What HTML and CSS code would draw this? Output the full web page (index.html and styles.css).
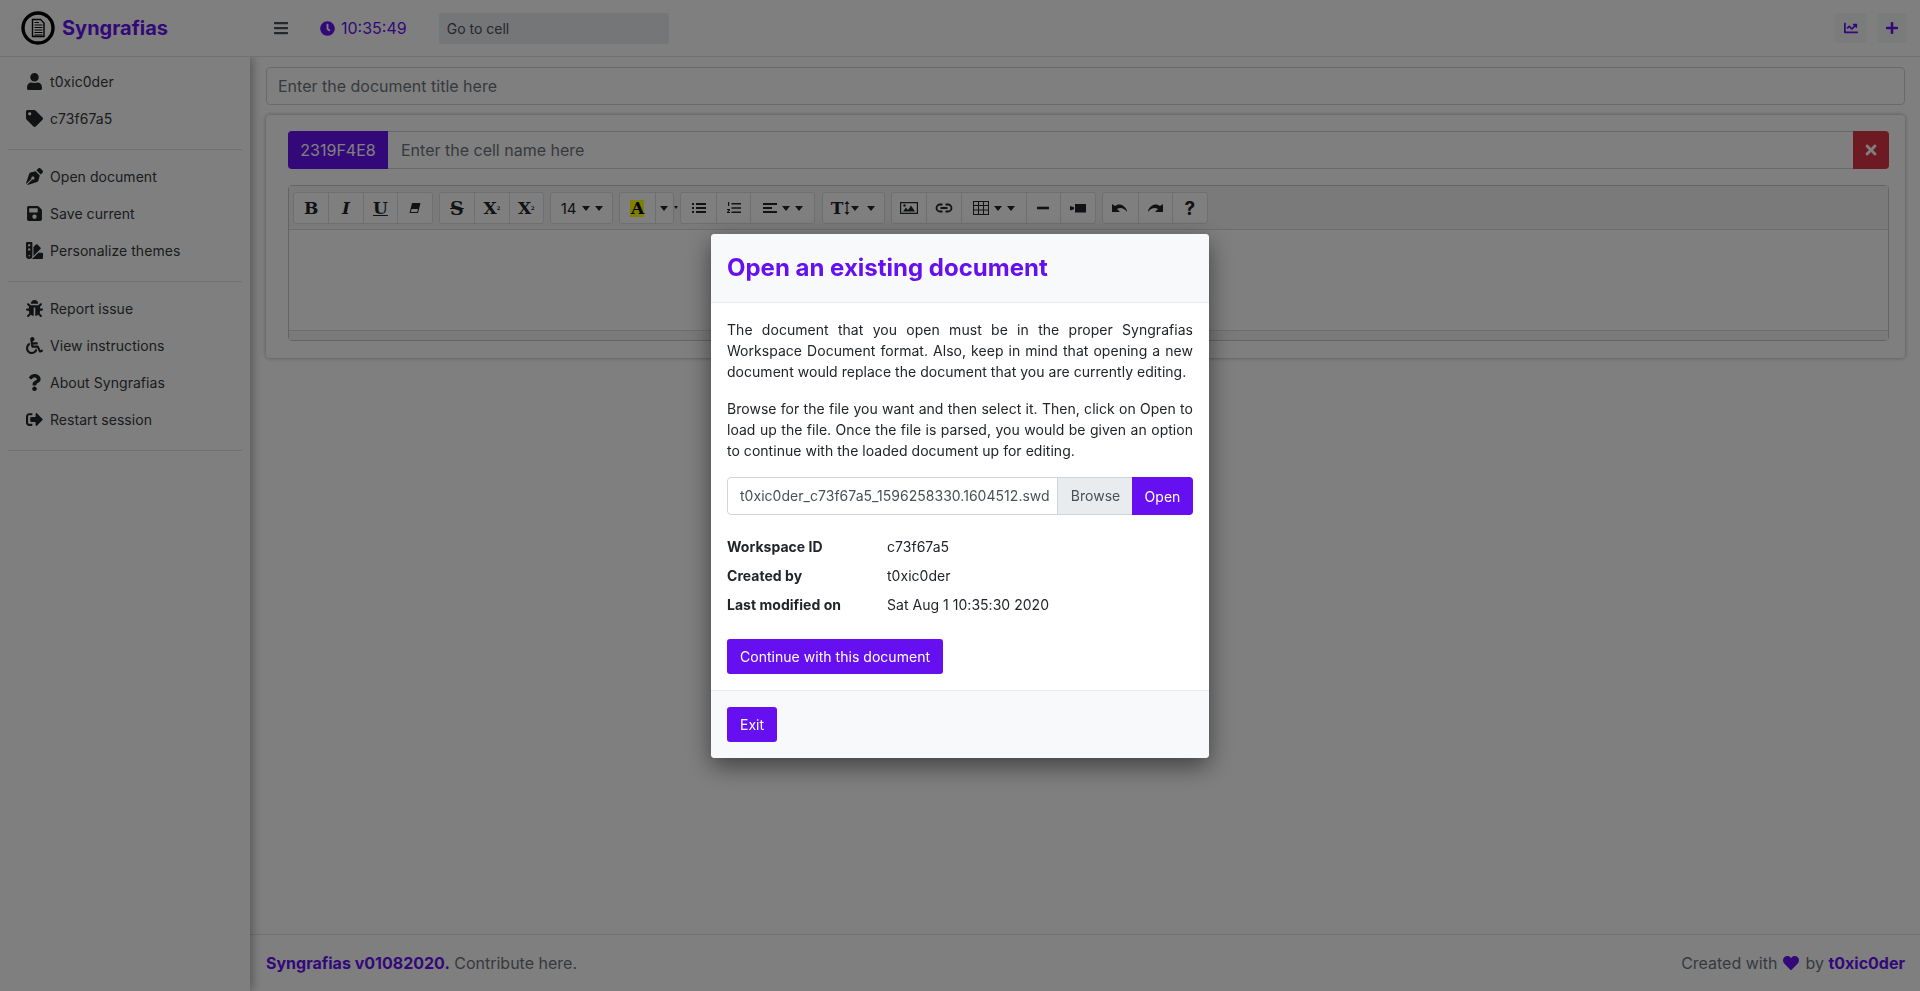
FILE: index.html
```html
<!DOCTYPE html>
<html lang="en">
<head>
  <meta charset="UTF-8">
  <meta name="viewport" content="width=device-width, initial-scale=1.0">
  <title>Syngrafias</title>
  <link rel="stylesheet" href="styles.css">
</head>
<body>
  <!-- Top bar -->
  <header class="topbar">
    <div class="brand">
      <svg class="logo" viewBox="0 0 34 34">
        <circle cx="17" cy="17" r="15" fill="none" stroke="#000" stroke-width="3.4"/>
        <path d="M11.500 8.500h8l3.500 3.500v13.500H11.500z" fill="none" stroke="#000" stroke-width="1.4"/>
        <path d="M13.500 11.500h4.500M13.500 14h8M13.500 16.500h8M13.500 19h8M13.500 21.500h8M13.500 24h8" stroke="#000" stroke-width="1.2"/>
      </svg>
      <span class="brand-name">Syngrafias</span>
    </div>
    <svg class="bars" viewBox="0 0 448 512"><path d="M16 132h416c8.837 0 16-7.163 16-16V76c0-8.837-7.163-16-16-16H16C7.163 60 0 67.163 0 76v40c0 8.837 7.163 16 16 16zm0 160h416c8.837 0 16-7.163 16-16v-40c0-8.837-7.163-16-16-16H16c-8.837 0-16 7.163-16 16v40c0 8.837 7.163 16 16 16zm0 160h416c8.837 0 16-7.163 16-16v-40c0-8.837-7.163-16-16-16H16c-8.837 0-16 7.163-16 16v40c0 8.837 7.163 16 16 16z"/></svg>
    <div class="clock">
      <svg viewBox="0 0 512 512"><path d="M256,8C119,8,8,119,8,256S119,504,256,504,504,393,504,256,393,8,256,8Zm92.49,313h0l-20,25a16,16,0,0,1-22.49,2.5h0l-67-49.72a40,40,0,0,1-15-31.23V112a16,16,0,0,1,16-16h32a16,16,0,0,1,16,16V256l58,42.5A16,16,0,0,1,348.49,321Z"/></svg>
      <span>10:35:49</span>
    </div>
    <div class="goto">Go to cell</div>
    <div class="top-actions">
      <div class="icon-btn chart"><svg viewBox="0 0 512 512"><path d="M496 384H64V80c0-8.84-7.16-16-16-16H16C7.16 64 0 71.16 0 80v336c0 17.67 14.33 32 32 32h464c8.84 0 16-7.16 16-16v-32c0-8.84-7.16-16-16-16zM464 96H345.94c-21.38 0-32.09 25.85-16.97 40.97l32.4 32.4L288 242.75l-73.37-73.37c-12.5-12.5-32.76-12.5-45.25 0l-68.69 68.69c-6.25 6.25-6.25 16.38 0 22.63l22.62 22.62c6.25 6.25 16.38 6.25 22.63 0L192 237.25l73.37 73.37c12.5 12.5 32.76 12.5 45.25 0l96-96 32.4 32.4c15.12 15.12 40.97 4.41 40.97-16.97V112c.01-8.84-7.15-16-15.99-16z"/></svg></div>
      <div class="icon-btn plus"><svg viewBox="0 0 448 512"><path d="M416 208H272V64c0-17.67-14.33-32-32-32h-32c-17.67 0-32 14.33-32 32v144H32c-17.67 0-32 14.33-32 32v32c0 17.67 14.33 32 32 32h144v144c0 17.67 14.33 32 32 32h32c17.67 0 32-14.33 32-32V304h144c17.67 0 32-14.33 32-32v-32c0-17.67-14.33-32-32-32z"/></svg></div>
    </div>
  </header>

  <div class="wrapper">
    <!-- Sidebar -->
    <aside class="sidebar">
      <ul class="side-list">
        <li><svg viewBox="0 0 448 512"><path d="M224 256c70.7 0 128-57.3 128-128S294.7 0 224 0 96 57.3 96 128s57.3 128 128 128zm89.6 32h-16.7c-22.2 10.2-46.9 16-72.9 16s-50.6-5.8-72.9-16h-16.7C60.2 288 0 348.2 0 422.4V464c0 26.5 21.5 48 48 48h352c26.5 0 48-21.5 48-48v-41.6c0-74.2-60.2-134.4-134.4-134.4z"/></svg>t0xic0der</li>
        <li><svg viewBox="0 0 512 512"><path d="M0 252.118V48C0 21.49 21.49 0 48 0h204.118a48 48 0 0 1 33.941 14.059l211.882 211.882c18.745 18.745 18.745 49.137 0 67.882L293.823 497.941c-18.745 18.745-49.137 18.745-67.882 0L14.059 286.059A48 48 0 0 1 0 252.118zM112 64c-26.51 0-48 21.49-48 48s21.49 48 48 48 48-21.49 48-48-21.49-48-48-48z"/></svg>c73f67a5</li>
      </ul>
      <ul class="side-list">
        <li><svg viewBox="0 0 512 512"><path d="M136.6 138.79a64.003 64.003 0 0 0-43.31 41.35L0 460l14.69 14.69L164.8 324.58c-2.99-6.26-4.8-13.18-4.8-20.58 0-26.51 21.49-48 48-48s48 21.49 48 48-21.49 48-48 48c-7.4 0-14.32-1.81-20.58-4.8L37.31 497.31 52 512l279.86-93.29a64.003 64.003 0 0 0 41.35-43.31L416 224 288 96l-151.4 42.79zm361.34-64.62l-60.11-60.11c-18.75-18.75-49.16-18.75-67.91 0l-56.55 56.55 128.02 128.02 56.55-56.55c18.75-18.75 18.75-49.15 0-67.91z"/></svg>Open document</li>
        <li><svg viewBox="0 0 448 512"><path d="M433.941 129.941l-83.882-83.882A48 48 0 0 0 316.118 32H48C21.49 32 0 53.49 0 80v352c0 26.51 21.49 48 48 48h352c26.51 0 48-21.49 48-48V163.882a48 48 0 0 0-14.059-33.941zM224 416c-35.346 0-64-28.654-64-64 0-35.346 28.654-64 64-64s64 28.654 64 64c0 35.346-28.654 64-64 64zm96-304.52V212c0 6.627-5.373 12-12 12H76c-6.627 0-12-5.373-12-12V108c0-6.627 5.373-12 12-12h228.52c3.183 0 6.235 1.264 8.485 3.515l3.48 3.48A11.996 11.996 0 0 1 320 111.48z"/></svg>Save current</li>
        <li><svg viewBox="0 0 512 512"><path d="M434.66,167.71h0L344.5,77.36a31.83,31.83,0,0,0-45-.07h0l-.07.07L224,152.88V424L434.66,212.9A32,32,0,0,0,434.66,167.71ZM480,320H373.09L186.68,506.51c-2.06,2.07-4.5,3.58-6.68,5.49H480a32,32,0,0,0,32-32V352A32,32,0,0,0,480,320ZM192,32A32,32,0,0,0,160,0H32A32,32,0,0,0,0,32V416a96,96,0,0,0,192,0ZM96,440a24,24,0,1,1,24-24A24,24,0,0,1,96,440Zm32-184H64V192h64Zm0-128H64V64h64Z"/></svg>Personalize themes</li>
      </ul>
      <ul class="side-list">
        <li><svg viewBox="0 0 512 512"><path d="M511.988 288.9c-.478 17.43-15.217 31.1-32.653 31.1H424v16c0 21.864-4.882 42.584-13.6 61.145l60.228 60.228c12.496 12.497 12.496 32.758 0 45.255-12.498 12.497-32.759 12.496-45.256 0l-54.736-54.736C345.886 467.965 314.351 480 280 480V236c0-6.627-5.373-12-12-12h-24c-6.627 0-12 5.373-12 12v244c-34.351 0-65.886-12.035-90.636-32.108l-54.736 54.736c-12.498 12.497-32.759 12.496-45.256 0-12.496-12.497-12.496-32.758 0-45.255l60.228-60.228C92.882 378.584 88 357.864 88 336v-16H32.666C15.23 320 .491 306.33.013 288.9-.484 270.816 14.028 256 32 256h56v-58.745l-46.628-46.628c-12.496-12.497-12.496-32.758 0-45.255 12.498-12.497 32.758-12.497 45.256 0L141.255 160h229.489l54.627-54.627c12.498-12.497 32.758-12.497 45.256 0 12.496 12.497 12.496 32.758 0 45.255L424 197.255V256h56c17.972 0 32.484 14.816 31.988 32.9zM257 0c-61.856 0-112 50.144-112 112h224C369 50.144 318.856 0 257 0z"/></svg>Report issue</li>
        <li><svg viewBox="0 0 512 512"><path d="M496.101 385.669l14.227 28.663c3.929 7.915.697 17.516-7.218 21.445l-65.465 32.886c-16.049 7.967-35.556 1.194-43.189-15.055L331.679 320H192c-15.925 0-29.426-11.71-31.679-27.475C126.433 55.308 128.38 70.044 128 64c0-36.358 30.318-65.635 67.052-63.929 33.271 1.545 60.048 28.905 60.925 62.201.868 32.933-23.152 60.423-54.608 65.039l4.67 32.69H336c8.837 0 16 7.163 16 16v32c0 8.837-7.163 16-16 16H215.182l4.572 32H352a32 32 0 0 1 28.962 18.392L438.477 396.8l36.178-18.349c7.915-3.929 17.517-.697 21.446 7.218zM311.358 352h-24.506c-7.788 54.204-54.528 96-110.852 96-61.757 0-112-50.243-112-112 0-41.505 22.694-77.809 56.324-97.156-3.712-25.965-6.844-47.86-9.488-66.333C45.956 198.464 0 261.963 0 336c0 97.047 78.953 176 176 176 71.87 0 133.806-43.308 161.11-105.192L311.358 352z"/></svg>View instructions</li>
        <li><svg viewBox="0 0 512 512"><path transform="translate(64 0)" d="M202.021 0C122.202 0 70.503 32.703 29.914 91.026c-7.363 10.58-5.093 25.086 5.178 32.874l43.138 32.709c10.373 7.865 25.132 6.026 33.253-4.148 25.049-31.381 43.63-49.449 82.757-49.449 30.764 0 68.816 19.799 68.816 49.631 0 22.552-18.617 34.134-48.993 51.164-35.423 19.86-82.299 44.576-82.299 106.405V320c0 13.255 10.745 24 24 24h72.471c13.255 0 24-10.745 24-24v-5.773c0-42.86 125.268-44.645 125.268-160.627C377.504 66.256 286.902 0 202.021 0zM192 373.459c-38.196 0-69.271 31.075-69.271 69.271 0 38.195 31.075 69.27 69.271 69.27s69.271-31.075 69.271-69.271-31.075-69.27-69.271-69.27z"/></svg>About Syngrafias</li>
        <li><svg viewBox="0 0 512 512"><path d="M497 273L329 441c-15 15-41 4.5-41-17v-96H152c-13.3 0-24-10.7-24-24v-96c0-13.3 10.7-24 24-24h136V88c0-21.4 25.9-32 41-17l168 168c9.3 9.4 9.3 24.6 0 34zM192 436v-40c0-6.6-5.4-12-12-12H96c-17.7 0-32-14.3-32-32V160c0-17.7 14.3-32 32-32h84c6.6 0 12-5.4 12-12V76c0-6.6-5.4-12-12-12H96c-53 0-96 43-96 96v192c0 53 43 96 96 96h84c6.6 0 12-5.4 12-12z"/></svg>Restart session</li>
      </ul>
    </aside>

    <div class="page">
      <main class="content">
        <div class="title-input">Enter the document title here</div>

        <section class="cell-card">
          <div class="cell-head">
            <span class="cell-id">2319F4E8</span>
            <span class="cell-name">Enter the cell name here</span>
            <span class="cell-close"><svg viewBox="0 0 352 512"><path d="M242.72 256l100.07-100.07c12.28-12.28 12.28-32.19 0-44.48l-22.24-22.24c-12.28-12.28-32.19-12.28-44.48 0L176 189.28 75.93 89.21c-12.28-12.28-32.19-12.28-44.48 0L9.21 111.45c-12.28 12.28-12.28 32.19 0 44.48L109.28 256 9.21 356.07c-12.28 12.28-12.28 32.19 0 44.48l22.24 22.24c12.28 12.28 32.2 12.28 44.48 0L176 322.72l100.07 100.07c12.28 12.28 32.2 12.28 44.48 0l22.24-22.24c12.28-12.28 12.28-32.19 0-44.48L242.72 256z"/></svg></span>
          </div>

          <!-- Editor toolbar -->
          <div class="editor">
            <div class="toolbar">
              <div class="tb-group">
                <span class="tb-btn tb-letter"><b>B</b></span>
                <span class="tb-btn tb-letter"><b><i>I</i></b></span>
                <span class="tb-btn tb-letter"><b class="under">U</b></span>
                <span class="tb-btn"><svg class="tb-icon" viewBox="0 0 14 14"><path d="M4 2h8.500L10 12H1.500zM3.600 8l-.8 3h6.400l.8-3z" fill-rule="evenodd"/></svg></span>
              </div>
              <div class="tb-group">
                <span class="tb-btn tb-letter"><b class="strike">S</b></span>
                <span class="tb-btn tb-letter"><b>X</b><sup>2</sup></span>
                <span class="tb-btn tb-letter"><b>X</b><sub>2</sub></span>
              </div>
              <div class="tb-group">
                <span class="tb-btn tb-size">14<i class="caret"></i><i class="caret"></i></span>
              </div>
              <div class="tb-group tb-color">
                <span class="tb-btn tb-letter"><b class="hilite">A</b></span>
                <span class="tb-btn tb-narrow"><i class="caret"></i></span>
              </div>
              <div class="tb-group">
                <span class="tb-btn"><svg class="tb-icon" viewBox="0 0 14 14"><path d="M0 2h2v2H0zM4 2h10v2H4zM0 6h2v2H0zM4 6h10v2H4zM0 10h2v2H0zM4 10h10v2H4z"/></svg></span>
                <span class="tb-btn"><svg class="tb-icon" viewBox="0 0 14 14"><path d="M4.500 2H14v1.600H4.500zM4.500 6.200H14v1.600H4.500zM4.500 10.400H14V12H4.500zM1 1h1.200v4H1zM0 8h3v1.200L1.400 11H3v1H0v-1.100L1.700 9H0z"/></svg></span>
                <span class="tb-btn tb-wide"><svg class="tb-icon" viewBox="0 0 14 14"><path d="M0 2h14v2H0zM0 6h9v2H0zM0 10h14v2H0z"/></svg><i class="caret"></i><i class="caret"></i></span>
              </div>
              <div class="tb-group">
                <span class="tb-btn tb-height tb-letter"><b>T</b><svg class="tb-arrow" viewBox="0 0 6 14"><path d="M3 0l2.500 3H3.600v8h1.900L3 14 .5 11h1.900V3H.5z"/></svg><i class="caret caret-tight"></i><i class="caret"></i></span>
              </div>
              <div class="tb-group">
                <span class="tb-btn tb-wider"><svg class="tb-icon tb-pic" viewBox="0 0 18 14"><path fill-rule="evenodd" d="M0 1h18v12H0zM1.200 2.200v9.600h15.600V2.200zM3 10.500l3-4 2 2.500 3-4.500 4 6z"/><circle cx="4.500" cy="4.500" r="1.200"/></svg></span>
                <span class="tb-btn tb-wider"><svg class="tb-icon tb-pic" viewBox="0 0 18 14"><path d="M7.500 3.500H5a3.500 3.500 0 0 0 0 7h2.500M10.500 3.500H13a3.500 3.500 0 0 1 0 7h-2.500M5.500 7h7" fill="none" stroke="#212529" stroke-width="1.800"/></svg></span>
                <span class="tb-btn tb-table"><svg class="tb-icon tb-grid" viewBox="0 0 16 14"><path fill-rule="evenodd" d="M0 0h16v14H0zM1 1v3h4V1zm5 0v3h4V1zm5 0v3h4V1zM1 5v3.500h4V5zm5 0v3.500h4V5zm5 0v3.500h4V5zM1 9.500V13h4V9.500zm5 0V13h4V9.500zm5 0V13h4V9.500z"/></svg><i class="caret"></i><i class="caret"></i></span>
                <span class="tb-btn tb-wider"><svg class="tb-icon" viewBox="0 0 14 14"><path d="M1 5.700h12v2.600H1z"/></svg></span>
                <span class="tb-btn tb-wider"><svg class="tb-icon tb-pic" viewBox="0 0 18 14"><path d="M6 3h11v8.500H6zM1 5l4 1.200v2.100L1 9.500z"/></svg></span>
              </div>
              <div class="tb-group">
                <span class="tb-btn tb-wider"><svg class="tb-icon tb-pic" viewBox="0 0 18 14"><path d="M1 3v8h8L6 8c3-2 7-1.500 10 3 0-4-4-7-7-7.500-2-.3-3.500.5-5 1.500z"/></svg></span>
                <span class="tb-btn tb-wider"><svg class="tb-icon tb-pic" viewBox="0 0 18 14"><path d="M17 3v8H9l3-3C9 6 5 6.500 2 11c0-4 4-7 7-7.500 2-.3 3.500.5 5 1.500z"/></svg></span>
                <span class="tb-btn tb-help"><b>?</b></span>
              </div>
            </div>
            <div class="edit-area"></div>
            <div class="edit-handle"></div>
          </div>
        </section>
      </main>

      <footer class="footer">
        <div><a class="strong">Syngrafias v01082020.</a> Contribute here.</div>
        <div class="made-by">Created with <svg viewBox="0 0 512 512"><path d="M462.3 62.6C407.5 15.9 326 24.3 275.7 76.2L256 96.5l-19.7-20.3C186.1 24.3 104.5 15.9 49.700 62.600c-62.800 53.600-66.100 149.800-9.900 207.900l193.500 199.800c12.500 12.900 32.800 12.900 45.300 0l193.500-199.800c56.300-58.100 53-154.300-9.800-207.900z"/></svg> by <a class="strong">t0xic0der</a></div>
      </footer>
    </div>
  </div>

  <!-- Open document dialog -->
  <div class="backdrop"></div>
  <div class="modal-layer">
    <div class="modal">
      <div class="modal-header">
        <h5>Open an existing document</h5>
      </div>
      <div class="modal-body">
        <p>The document that you open must be in the proper Syngrafias Workspace Document format. Also, keep in mind that opening a new document would replace the document that you are currently editing.</p>
        <p>Browse for the file you want and then select it. Then, click on Open to load up the file. Once the file is parsed, you would be given an option to continue with the loaded document up for editing.</p>
        <div class="file-group">
          <span class="file-name">t0xic0der_c73f67a5_1596258330.1604512.swd</span>
          <span class="file-browse">Browse</span>
          <button class="btn btn-open">Open</button>
        </div>
        <dl class="meta">
          <dt>Workspace ID</dt><dd>c73f67a5</dd>
          <dt>Created by</dt><dd>t0xic0der</dd>
          <dt>Last modified on</dt><dd>Sat Aug 1 10:35:30 2020</dd>
        </dl>
        <button class="btn">Continue with this document</button>
      </div>
      <div class="modal-footer">
        <button class="btn">Exit</button>
      </div>
    </div>
  </div>
</body>
</html>
```

FILE: styles.css
```css
* {
  box-sizing: border-box;
}

html, body {
  height: 100%;
}

body {
  margin: 0;
  display: flex;
  flex-direction: column;
  font-family: Inter, "Liberation Sans", sans-serif;
  font-size: 16px;
  color: #212529;
  background-color: #fff;
  overflow: hidden;
}

/* top bar */
.topbar {
  display: flex;
  align-items: center;
  height: 57px;
  flex-shrink: 0;
  padding: 0 13px 0 21px;
  background-color: #fff;
  border-bottom: 1px solid #dee2e6;
  position: relative;
  z-index: 2;
}

.brand {
  display: flex;
  align-items: center;
  width: 253px;
}

.logo {
  width: 34px;
  height: 34px;
  margin-right: 7px;
}

.brand-name {
  font-size: 20px;
  font-weight: 700;
  color: #6610f2;
}

.bars {
  width: 14px;
  height: 16px;
  fill: #495057;
}

.clock {
  display: flex;
  align-items: center;
  margin-left: 32px;
  color: #6610f2;
}

.clock svg {
  width: 15px;
  height: 15px;
  margin-right: 6px;
  fill: #6610f2;
}

.goto {
  width: 230px;
  height: 31px;
  margin-left: 32px;
  padding: 0 8px;
  line-height: 31px;
  font-size: 14px;
  color: #495057;
  background-color: #e9ecef;
  border-radius: 3px;
}

.top-actions {
  display: flex;
  gap: 10px;
  margin-left: auto;
}

.icon-btn {
  display: flex;
  align-items: center;
  justify-content: center;
  height: 30px;
  background-color: #f5f6f7;
  border-radius: 3px;
}

.icon-btn.chart {
  width: 32px;
}

.icon-btn.plus {
  width: 30px;
}

.icon-btn svg {
  width: 14px;
  height: 16px;
  fill: #6610f2;
}

.icon-btn.plus svg {
  width: 12px;
}

/* sidebar and page */
.wrapper {
  display: flex;
  flex: 1;
  min-height: 0;
}

.sidebar {
  width: 250px;
  flex-shrink: 0;
  padding: 6px 8px 0;
  background-color: #fff;
  box-shadow: 2px 0 10px rgba(0, 0, 0, 0.35);
  z-index: 1;
}

.side-list {
  list-style: none;
  margin: 0;
  padding: 0 0 12px;
  border-bottom: 1px solid #dee2e6;
  margin-bottom: 8px;
}

.side-list li {
  display: flex;
  align-items: center;
  height: 37px;
  padding-left: 18px;
  font-size: 14px;
  letter-spacing: 0.05px;
  color: #343a40;
}

.side-list svg {
  width: 17px;
  height: 17px;
  margin-right: 7px;
  fill: #212529;
}

.page {
  display: flex;
  flex-direction: column;
  flex: 1;
  min-width: 0;
}

.content {
  flex: 1;
  padding: 10px 15px 0 16px;
}

.title-input {
  height: 38px;
  padding: 0 11px;
  line-height: 36px;
  color: #6c757d;
  border: 1px solid #ced4da;
  border-radius: 4px;
}

.cell-card {
  height: 243px;
  margin-top: 10px;
  padding: 16px 16px 0 22px;
  border-radius: 4px;
  box-shadow: 0 0 4px rgba(0, 0, 0, 0.35);
}

.cell-head {
  display: flex;
  height: 38px;
  border: 1px solid #ced4da;
  border-radius: 4px;
}

.cell-id {
  width: 100px;
  margin: -1px 0 -1px -1px;
  line-height: 38px;
  text-align: center;
  color: #fff;
  background-color: #6610f2;
  border-radius: 4px 0 0 4px;
}

.cell-name {
  flex: 1;
  padding-left: 13px;
  line-height: 36px;
  color: #6c757d;
}

.cell-close {
  display: flex;
  align-items: center;
  justify-content: center;
  width: 36px;
  margin: -1px -1px -1px 0;
  background-color: #dc3545;
  border-radius: 0 4px 4px 0;
}

.cell-close svg {
  width: 12px;
  height: 16px;
  fill: #fff;
}

/* editor toolbar */
.editor {
  margin-top: 16px;
  border: 1px solid #c8c8c8;
  border-radius: 4px;
}

.toolbar {
  display: flex;
  gap: 6.2px;
  height: 44px;
  padding: 6px 4px 0;
  background-color: #f5f5f5;
  border-bottom: 1px solid #ddd;
}

.tb-group {
  display: flex;
  height: 32px;
  background-color: #fff;
  border: 1px solid #dae0e5;
  border-radius: 3px;
}

.tb-btn {
  display: flex;
  align-items: center;
  justify-content: center;
  width: 34.4px;
  font-size: 14px;
  color: #212529;
  border-left: 1px solid #dae0e5;
}

.tb-btn:first-child {
  border-left: 0;
}

.tb-letter {
  font-family: "DejaVu Serif", "Liberation Serif", serif;
  font-size: 17px;
}

.tb-letter sup,
.tb-letter sub {
  font-size: 5px;
  font-weight: 700;
}

.under {
  text-decoration: underline;
}

.strike {
  font-size: 19px;
  text-decoration: line-through;
}

.hilite {
  display: block;
  width: 14px;
  height: 17px;
  font-size: 17px;
  line-height: 17px;
  text-align: center;
  color: #000;
  background-color: #ff0;
}

.tb-size {
  width: 61px;
  font-size: 15px;
}

.tb-wide {
  width: 64.2px;
}

.tb-height {
  width: 61px;
}

.tb-wider {
  width: 34.6px;
}

.tb-table {
  width: 64.6px;
}

.tb-narrow {
  width: 18.6px;
}

.tb-narrow .caret {
  margin-left: 0;
}

.tb-help {
  font-size: 19px;
}

.tb-color {
  position: relative;
}

.tb-color::after {
  content: "";
  position: absolute;
  top: 13px;
  right: -5px;
  border-top: 3px solid #212529;
  border-left: 2px solid transparent;
  border-right: 2px solid transparent;
}

.tb-icon {
  width: 14px;
  height: 14px;
  fill: #212529;
}

.tb-pic {
  width: 18px;
}

.tb-grid {
  width: 16px;
}

.tb-arrow {
  width: 6px;
  height: 14px;
  margin-left: 1px;
  fill: #212529;
}

.caret {
  display: inline-block;
  margin-left: 5px;
  border-top: 5px solid #212529;
  border-left: 4px solid transparent;
  border-right: 4px solid transparent;
}

.caret-tight {
  margin-left: 1px;
  margin-right: 3px;
}

.edit-area {
  height: 100px;
}

.edit-handle {
  height: 10px;
  background-color: #f5f5f5;
  border-top: 1px solid #ddd;
}

/* footer */
.footer {
  display: flex;
  justify-content: space-between;
  align-items: center;
  height: 57px;
  flex-shrink: 0;
  padding: 0 15px 0 16px;
  color: #6c757d;
  border-top: 1px solid #dee2e6;
}

.strong {
  font-weight: 700;
  color: #6610f2;
}

.made-by svg {
  width: 16px;
  height: 16px;
  margin: 0 1.5px;
  vertical-align: -2px;
  fill: #6610f2;
}

/* dialog */
.backdrop {
  position: fixed;
  inset: 0;
  background-color: rgba(0, 0, 0, 0.5);
  z-index: 10;
}

.modal-layer {
  position: fixed;
  inset: 0;
  display: flex;
  justify-content: center;
  padding-top: 234px;
  z-index: 11;
}

.modal {
  width: 498px;
  height: 524px;
  background-color: #fff;
  border-radius: 4px;
  box-shadow: 0 8px 24px rgba(0, 0, 0, 0.5);
  overflow: hidden;
}

.modal-header {
  height: 69px;
  padding: 0 16px;
  background-color: #f8f9fa;
  border-bottom: 1px solid #e9ecef;
}

.modal-header h5 {
  margin: 0;
  font-size: 24px;
  line-height: 68px;
  font-weight: 700;
  color: #6610f2;
}

.modal-body {
  height: 388px;
  padding: 16px 16px 0;
  font-size: 14px;
  line-height: 21px;
  letter-spacing: 0.03px;
  border-bottom: 1px solid #e9ecef;
}

.modal-body p {
  margin: 0 0 16px;
  text-align: justify;
}

.file-group {
  display: flex;
  height: 38px;
  margin-bottom: 21px;
  line-height: 36px;
  border: 1px solid #ced4da;
  border-radius: 4px;
}

.file-name {
  flex: 1;
  padding-left: 12px;
  color: #495057;
  white-space: nowrap;
  overflow: hidden;
}

.file-browse {
  width: 76px;
  text-align: center;
  color: #495057;
  background-color: #e9ecef;
  border-left: 1px solid #ced4da;
}

.meta {
  display: grid;
  grid-template-columns: 160px 1fr;
  row-gap: 8px;
  margin: 0 0 24px;
}

.meta dt {
  font-weight: 700;
}

.meta dd {
  margin: 0;
}

.btn {
  display: block;
  height: 35px;
  padding: 0 13px;
  font-family: inherit;
  font-size: 14px;
  letter-spacing: 0.03px;
  color: #fff;
  background-color: #6610f2;
  border: 0;
  border-radius: 3px;
}

.btn-open {
  width: 61px;
  height: 38px;
  margin: -1px;
  padding: 0;
  border-radius: 0 4px 4px 0;
}

.modal-footer {
  height: 67px;
  padding: 16px;
  background-color: #f8f9fa;
}
```
